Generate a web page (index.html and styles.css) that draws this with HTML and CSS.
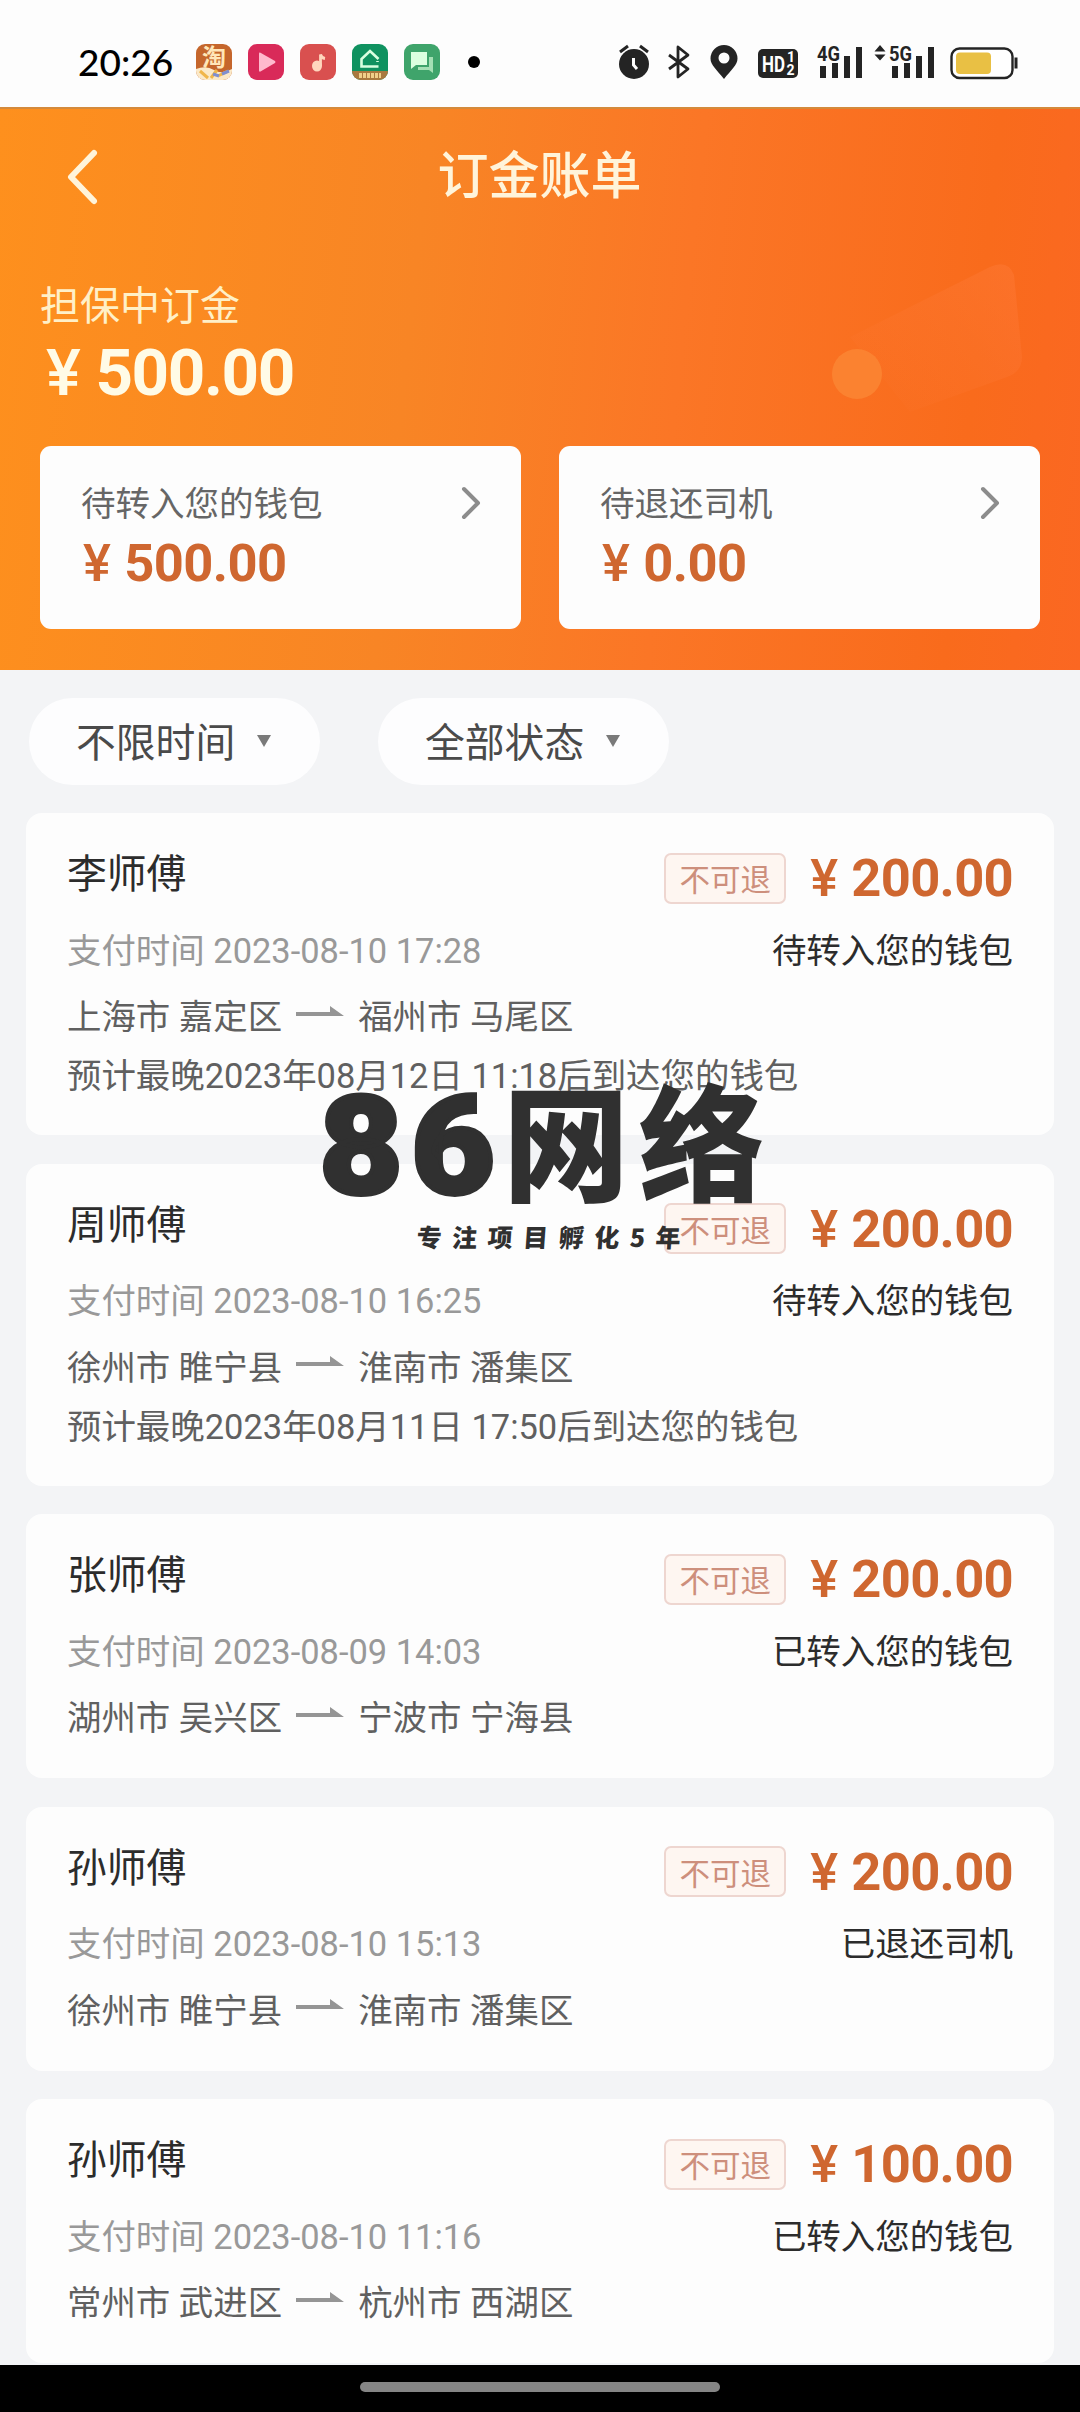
FILE: index.html
```html
<!DOCTYPE html>
<html lang="zh-CN">
<head>
<meta charset="utf-8">
<title>订金账单</title>
<link rel="stylesheet" href="styles.css">
</head>
<body>
<div class="screen">
  <div class="status">
    <span class="clock">20:26</span>
    <div class="apps">
      <svg class="app" viewBox="0 0 36 36"><defs><clipPath id="r"><rect width="36" height="36" rx="9"/></clipPath></defs><g clip-path="url(#r)"><rect width="36" height="36" fill="#c5662c"/><path d="M0 25Q10 21 18 26T36 25V36H0Z" fill="#fbe9c8"/><path d="M4 27l8 7M15 34l6-8M22 32l10-5" stroke="#f0b64a" stroke-width="3"/><path d="M17 30l6 2M26 30l7-3" stroke="#7f8fd0" stroke-width="3"/></g><text class="tao" x="18" y="22" text-anchor="middle">淘</text></svg>
      <svg class="app" viewBox="0 0 36 36"><rect width="36" height="36" rx="9" fill="#d92a59"/><path d="M11 9.500Q11 8 12.500 8.800L27 17Q28 18 27 19L12.500 27.500Q11 28 11 26.500Z" fill="#ffb9cd"/></svg>
      <svg class="app" viewBox="0 0 36 36"><rect width="36" height="36" rx="9" fill="#d9504f"/><ellipse cx="17" cy="22" rx="5" ry="5.500" fill="#ffd6bd"/><path d="M20.500 22V10.500Q21.500 14 25 14.500" fill="none" stroke="#ffd6bd" stroke-width="2.800"/></svg>
      <svg class="app" viewBox="0 0 36 36"><g clip-path="url(#r)"><rect width="36" height="36" fill="#0f9260"/><rect y="27" width="36" height="9" fill="#a9793f"/></g><path d="M26.500 15L18 7 9.500 15v7.500H26.500M25.500 17v1" fill="none" stroke="#d8ffe0" stroke-width="2.600"/><path d="M7 31.500H29" stroke="#efcf8a" stroke-width="5" stroke-dasharray="3 1"/></svg>
      <svg class="app" viewBox="0 0 36 36"><rect width="36" height="36" rx="9" fill="#3fa46b"/><path d="M25 13h4v16l-4-3H14v-3h11Z" fill="#a5e0b4"/><path d="M7 8H23V21H12L7 25Z" fill="#dcffdf"/></svg>
    </div>
    <span class="dot"></span>
    <div class="sys">
      <svg class="s-all" viewBox="0 0 410 40" fill="#242424">
        <g><circle cx="18" cy="22" r="15"/><path d="M4 10l8-6M32 10l-8-6" stroke="#242424" stroke-width="3"/><path d="M17.500 16v7l3.500 4" fill="none" stroke="#fff" stroke-width="3"/></g>
        <path d="M53 13L72 27 62 35V5L72 13 53 27" fill="none" stroke="#242424" stroke-width="2.800" stroke-linejoin="round"/>
        <path fill-rule="evenodd" d="M108 37C101 28 94.500 23 94.500 16.500a13.500 13.500 0 0 1 27 0C121.500 23 115 28 108 37ZM108 10.500a5.500 5.500 0 1 0 0 11 5.500 5.500 0 0 0 0-11Z"/>
        <rect x="142" y="7" width="40" height="29" rx="5"/>
        <text class="hd" x="146" y="29.500" textLength="23" lengthAdjust="spacingAndGlyphs">HD</text>
        <text class="hds" x="171" y="20">1</text><text class="hds" x="170.500" y="32.500">2</text>
        <text class="net" x="201" y="18.500" textLength="23" lengthAdjust="spacingAndGlyphs">4G</text>
        <path d="M204 24h6v12h-6zM216 21h6v15h-6zM228 14h6v22h-6zM240 5h6v31h-6z"/>
        <path d="M264 3l5.500 6.500h-11zM264 18.500l5.500-6h-11z"/>
        <text class="net" x="273" y="18.500" textLength="23" lengthAdjust="spacingAndGlyphs">5G</text>
        <path d="M276 24h6v12h-6zM288 21h6v15h-6zM300 14h6v22h-6zM312 5h6v31h-6z"/>
        <rect x="335.500" y="6.500" width="61" height="29.500" rx="8" fill="#fff" stroke="#242424" stroke-width="2.400"/>
        <rect x="340" y="10.500" width="35" height="21.500" rx="4" fill="#e9c044"/>
        <path d="M398.500 15.500h3v11h-3z"/>
      </svg>
    </div>
  </div>

  <header class="hero">
    <svg class="hero-art" viewBox="0 0 300 210"><defs><linearGradient id="note" x1="1" y1="0" x2="0" y2="1"><stop offset="0" stop-color="#ff7d3c" stop-opacity=".4"/><stop offset="1" stop-color="#ff7d3c" stop-opacity="0"/></linearGradient></defs><path d="M60 90L200 20Q218 12 224 28L232 110Q232 125 217 130L120 165Z" fill="url(#note)"/><circle cx="67" cy="127" r="25" fill="#fb8734" opacity=".8"/></svg>
    <div class="nav">
      <svg class="back" viewBox="0 0 34 58"><path d="M28 5L5 29 28 53" fill="none" stroke="#fff4da" stroke-width="6" stroke-linecap="round" stroke-linejoin="round"/></svg>
      <h1 class="title">订金账单</h1>
    </div>
    <p class="hero-label">担保中订金</p>
    <p class="hero-sum"><span class="yen">¥</span>500.00</p>
    <div class="tiles">
      <div class="tile">
        <div class="tile-top"><span>待转入您的钱包</span><svg class="chev" viewBox="0 0 20 34"><path d="M3 3L17 17 3 31" fill="none" stroke="#8c8c8c" stroke-width="4" stroke-linecap="round" stroke-linejoin="round"/></svg></div>
        <p class="tile-sum"><span class="yen">¥</span>500.00</p>
      </div>
      <div class="tile">
        <div class="tile-top"><span>待退还司机</span><svg class="chev" viewBox="0 0 20 34"><path d="M3 3L17 17 3 31" fill="none" stroke="#8c8c8c" stroke-width="4" stroke-linecap="round" stroke-linejoin="round"/></svg></div>
        <p class="tile-sum"><span class="yen">¥</span>0.00</p>
      </div>
    </div>
  </header>

  <div class="filters">
    <div class="pill">不限时间<svg class="tri" viewBox="0 0 14 12"><path d="M0 0H14L7 12Z" fill="#7a7a7a"/></svg></div>
    <div class="pill">全部状态<svg class="tri" viewBox="0 0 14 12"><path d="M0 0H14L7 12Z" fill="#7a7a7a"/></svg></div>
  </div>

  <main class="list">
    <article class="card tall">
      <div class="row head"><span class="name">李师傅</span><span class="tag">不可退</span><span class="price"><span class="yen">¥</span>200.00</span></div>
      <div class="row meta"><span class="time">支付时间 2023-08-10 17:28</span><span class="state">待转入您的钱包</span></div>
      <div class="row route"><span>上海市 嘉定区</span><svg class="arrow" viewBox="0 0 48 10"><path d="M0 6H34V0L48 10H0Z" fill="#959595"/></svg><span>福州市 马尾区</span></div>
      <div class="row eta">预计最晚2023年08月12日 11:18后到达您的钱包</div>
    </article>
    <article class="card tall">
      <div class="row head"><span class="name">周师傅</span><span class="tag">不可退</span><span class="price"><span class="yen">¥</span>200.00</span></div>
      <div class="row meta"><span class="time">支付时间 2023-08-10 16:25</span><span class="state">待转入您的钱包</span></div>
      <div class="row route"><span>徐州市 睢宁县</span><svg class="arrow" viewBox="0 0 48 10"><path d="M0 6H34V0L48 10H0Z" fill="#959595"/></svg><span>淮南市 潘集区</span></div>
      <div class="row eta">预计最晚2023年08月11日 17:50后到达您的钱包</div>
    </article>
    <article class="card">
      <div class="row head"><span class="name">张师傅</span><span class="tag">不可退</span><span class="price"><span class="yen">¥</span>200.00</span></div>
      <div class="row meta"><span class="time">支付时间 2023-08-09 14:03</span><span class="state">已转入您的钱包</span></div>
      <div class="row route"><span>湖州市 吴兴区</span><svg class="arrow" viewBox="0 0 48 10"><path d="M0 6H34V0L48 10H0Z" fill="#959595"/></svg><span>宁波市 宁海县</span></div>
    </article>
    <article class="card">
      <div class="row head"><span class="name">孙师傅</span><span class="tag">不可退</span><span class="price"><span class="yen">¥</span>200.00</span></div>
      <div class="row meta"><span class="time">支付时间 2023-08-10 15:13</span><span class="state">已退还司机</span></div>
      <div class="row route"><span>徐州市 睢宁县</span><svg class="arrow" viewBox="0 0 48 10"><path d="M0 6H34V0L48 10H0Z" fill="#959595"/></svg><span>淮南市 潘集区</span></div>
    </article>
    <article class="card">
      <div class="row head"><span class="name">孙师傅</span><span class="tag">不可退</span><span class="price"><span class="yen">¥</span>100.00</span></div>
      <div class="row meta"><span class="time">支付时间 2023-08-10 11:16</span><span class="state">已转入您的钱包</span></div>
      <div class="row route"><span>常州市 武进区</span><svg class="arrow" viewBox="0 0 48 10"><path d="M0 6H34V0L48 10H0Z" fill="#959595"/></svg><span>杭州市 西湖区</span></div>
    </article>
  </main>

  <footer class="gesture"><span class="bar"></span></footer>

  <svg class="mark" viewBox="0 0 460 180">
    <text class="mark-num" x="5" y="114" textLength="84" lengthAdjust="spacingAndGlyphs">8</text>
    <text class="mark-num" x="97" y="114" textLength="84" lengthAdjust="spacingAndGlyphs">6</text>
    <text class="mark-big" x="189 325" y="112">网络</text>
    <text class="mark-sub" transform="translate(102 167) skewX(-4)" x="0" y="0" textLength="264" lengthAdjust="spacing">专注项目孵化5年</text>
  </svg>
</div>
</body>
</html>
```
FILE: styles.css
```css
* { box-sizing: border-box; margin: 0; padding: 0; }
body { font-family: Roboto, "Noto Sans CJK SC", sans-serif; background: #f3f4f6; }
.screen { position: relative; width: 1080px; height: 2412px; display: flex; flex-direction: column; overflow: hidden; }
svg { display: block; flex: none; }

.status { height: 107px; flex: none; background: #fdfdfd; display: flex; align-items: center; padding: 17px 54px 0 78px; }
.clock { font: 500 37px/40px Lato, sans-serif; color: #000; width: 118px; white-space: nowrap; }
.apps { display: flex; gap: 16px; }
.app { width: 36px; height: 36px; }
.tao { font: 700 24px "Noto Sans CJK SC", sans-serif; fill: #ffe6b8; }
.dot { width: 12px; height: 12px; border-radius: 50%; background: #000; margin-left: 28px; }
.sys { margin-left: auto; }
.s-all { width: 410px; height: 40px; }
.hd { font: 700 22px Roboto, sans-serif; fill: #fff; }
.hds { font: 700 14px Roboto, sans-serif; fill: #fff; }
.net { font: 700 20px Roboto, sans-serif; }

.hero { position: relative; height: 563px; flex: none; padding: 0 40px; background: linear-gradient(96deg, #fe901d 0%, #f88525 38%, #fb7626 62%, #f96b1c 88%, #fb6722 100%); border-top: 2px solid #d48a3c; }
.hero-art { position: absolute; left: 790px; top: 138px; width: 300px; height: 210px; }
.nav { height: 136px; display: flex; align-items: center; }
.back { width: 34px; height: 58px; margin-left: 26px; }
.title { flex: 1; margin-right: 61px; text-align: center; font-size: 51px; line-height: 60px; font-weight: 500; color: #fff4da; }
.hero-label { margin-top: 34px; font-size: 40px; line-height: 56px; color: #fff0c8; }
.hero-sum { margin-top: 5px; padding-left: 6px; font-size: 65.500px; line-height: 66px; font-weight: 700; letter-spacing: -1.400px; color: #fffbe6; }
.yen { display: inline-block; font-weight: 500; margin-right: 16px; }
.tiles { display: flex; gap: 38px; margin-top: 40px; }
.tile { flex: 1; height: 183px; background: #fdfdfd; border-radius: 11px; padding: 33px 40px 0 41px; }
.tile-top { display: flex; justify-content: space-between; align-items: center; height: 48px; font-size: 34.500px; color: #666; }
.tile-top span { margin-top: -4px; }
.chev { width: 20px; height: 34px; }
.tile-sum { margin-top: 3px; padding-left: 2px; font-size: 52.500px; line-height: 66px; font-weight: 700; letter-spacing: -.6px; color: #cf6730; }
.tile-sum .yen, .price .yen { margin-right: 14px; }

.filters { height: 143px; flex: none; display: flex; gap: 58px; padding: 28px 0 0 29px; }
.pill { width: 291px; height: 87px; border-radius: 44px; background: #fdfdfe; padding: 0 0 5px 47px; display: flex; align-items: center; gap: 22px; font-size: 39.800px; color: #4a4a4a; }
.tri { width: 14px; height: 12px; margin-top: 3px; }

.list { height: 1552px; flex: none; overflow: hidden; display: flex; flex-direction: column; gap: 28.500px; padding: 0 26px; }
.card { flex: none; background: #fdfdfd; border-radius: 16px; padding: 33px 41px 0; height: 264px; }
.tall { height: 322px; }
.row { display: flex; align-items: center; white-space: pre; color: #606060; font-size: 34.450px; }
.head { height: 64px; }
.name { flex: 1; font-size: 39.800px; color: #2c2c2c; padding-bottom: 15px; }
.tag { width: 122px; height: 51px; border: 2px solid #eed6d0; border-radius: 7px; background: #fef6f1; display: flex; align-items: center; justify-content: center; font-size: 30.500px; color: #cd8f7c; }
.price { margin-left: 24px; font-size: 52.500px; line-height: 60px; font-weight: 700; letter-spacing: -.7px; color: #cf6730; }
.meta { height: 75px; justify-content: space-between; }
.time { color: #999; }
.state { color: #2c2c2c; }
.route { height: 58px; gap: 14px; }
.arrow { width: 48px; height: 10px; margin-top: -7px; }
.eta { height: 60px; }

.gesture { flex: 1; background: #000; display: flex; justify-content: center; padding-top: 17px; }
.bar { width: 360px; height: 10px; border-radius: 5px; background: #858585; }

/* promotional mark laid over the list */
.mark { position: absolute; left: 314px; top: 1080px; width: 460px; height: 180px; fill: #303030; }
.mark-num { font: 900 137px Roboto, sans-serif; stroke: #303030; stroke-width: 4; }
.mark-big { font: 900 126px "Noto Sans CJK SC", sans-serif; }
.mark-sub { font: 900 25px "Noto Sans CJK SC", sans-serif; }
```
